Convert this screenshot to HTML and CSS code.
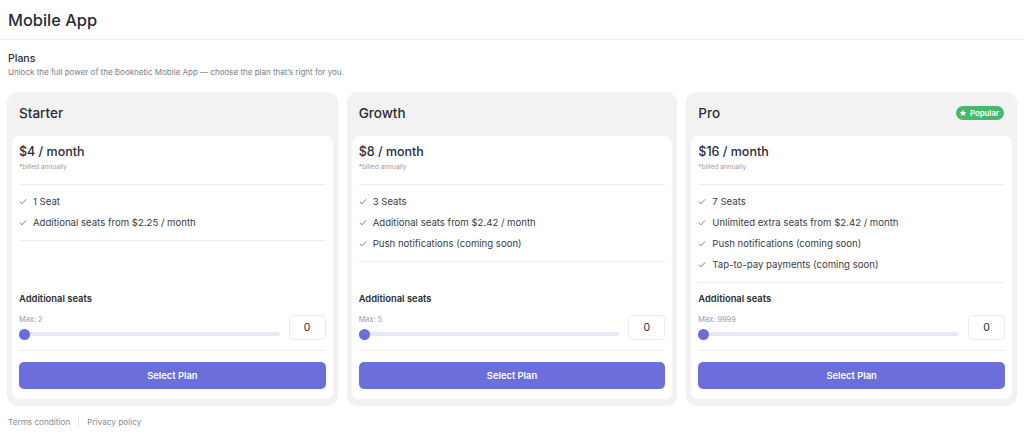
FILE: index.html
```html
<!DOCTYPE html>
<html>
<head>
<meta charset="utf-8">
<link rel="stylesheet" href="styles.css">
</head>
<body>
<header class="topbar"><h1 class="page-title">Mobile App</h1></header>
<main class="content">
  <section class="intro">
    <h2 class="intro-title">Plans</h2>
    <p class="intro-sub">Unlock the full power of the Booknetic Mobile App — choose the plan that’s right for you.</p>
  </section>
  <div class="plans">
    <div class="plan">
      <div class="plan-head"><span class="plan-name">Starter</span></div>
      <div class="plan-body">
        <div class="price">$4 / month</div>
        <div class="billed">*billed annually</div>
        <ul class="features">
          <li><svg class="chk" viewBox="0 0 10 8"><path d="M1 4.2 L3.7 6.8 L9 1.2"/></svg>1 Seat</li>
          <li><svg class="chk" viewBox="0 0 10 8"><path d="M1 4.2 L3.7 6.8 L9 1.2"/></svg>Additional seats from $2.25 / month</li>
        </ul>
        <div class="seats">
          <div class="seats-title">Additional seats</div>
          <div class="seats-row">
            <div class="slider-wrap">
              <div class="max">Max: 2</div>
              <div class="track"><span class="thumb"></span></div>
            </div>
            <div class="count">0</div>
          </div>
        </div>
        <button class="select">Select Plan</button>
      </div>
    </div>
    <div class="plan">
      <div class="plan-head"><span class="plan-name">Growth</span></div>
      <div class="plan-body">
        <div class="price">$8 / month</div>
        <div class="billed">*billed annually</div>
        <ul class="features">
          <li><svg class="chk" viewBox="0 0 10 8"><path d="M1 4.2 L3.7 6.8 L9 1.2"/></svg>3 Seats</li>
          <li><svg class="chk" viewBox="0 0 10 8"><path d="M1 4.2 L3.7 6.8 L9 1.2"/></svg>Additional seats from $2.42 / month</li>
          <li><svg class="chk" viewBox="0 0 10 8"><path d="M1 4.2 L3.7 6.8 L9 1.2"/></svg>Push notifications (coming soon)</li>
        </ul>
        <div class="seats">
          <div class="seats-title">Additional seats</div>
          <div class="seats-row">
            <div class="slider-wrap">
              <div class="max">Max: 5</div>
              <div class="track"><span class="thumb"></span></div>
            </div>
            <div class="count">0</div>
          </div>
        </div>
        <button class="select">Select Plan</button>
      </div>
    </div>
    <div class="plan">
      <div class="plan-head"><span class="plan-name">Pro</span>
        <span class="badge"><svg class="star" viewBox="0 0 10 10"><path d="M5 0.8 L6.2 3.6 L9.2 3.8 L6.9 5.8 L7.6 8.8 L5 7.2 L2.4 8.8 L3.1 5.8 L0.8 3.8 L3.8 3.6 Z"/></svg>Popular</span>
      </div>
      <div class="plan-body">
        <div class="price">$16 / month</div>
        <div class="billed">*billed annually</div>
        <ul class="features">
          <li><svg class="chk" viewBox="0 0 10 8"><path d="M1 4.2 L3.7 6.8 L9 1.2"/></svg>7 Seats</li>
          <li><svg class="chk" viewBox="0 0 10 8"><path d="M1 4.2 L3.7 6.8 L9 1.2"/></svg>Unlimited extra seats from $2.42 / month</li>
          <li><svg class="chk" viewBox="0 0 10 8"><path d="M1 4.2 L3.7 6.8 L9 1.2"/></svg>Push notifications (coming soon)</li>
          <li><svg class="chk" viewBox="0 0 10 8"><path d="M1 4.2 L3.7 6.8 L9 1.2"/></svg>Tap-to-pay payments (coming soon)</li>
        </ul>
        <div class="seats">
          <div class="seats-title">Additional seats</div>
          <div class="seats-row">
            <div class="slider-wrap">
              <div class="max">Max: 9999</div>
              <div class="track"><span class="thumb"></span></div>
            </div>
            <div class="count">0</div>
          </div>
        </div>
        <button class="select">Select Plan</button>
      </div>
    </div>
  </div>
  <footer class="foot">
    <a class="foot-link">Terms condition</a>
    <span class="foot-sep"></span>
    <a class="foot-link">Privacy policy</a>
  </footer>
</main>
</body>
</html>
```
FILE: styles.css
```css
* { box-sizing: border-box; }
html, body { margin: 0; padding: 0; background: #fff; }
body {
  font-family: "Inter", "Open Sans", sans-serif;
  color: #2b2d33;
  width: 1024px;
  height: 438px;
  overflow: hidden;
}
.topbar {
  height: 40px;
  border-bottom: 1px solid #ececef;
  padding: 0 8px;
  display: flex;
  align-items: center;
}
.page-title {
  margin: 0;
  font-size: 16.4px;
  font-weight: 500;
  color: #2a2c33;
}
.content { padding: 0 8px; }
.intro { padding-top: 12px; }
.intro-title {
  margin: 0;
  font-size: 10.5px;
  font-weight: 500;
  color: #2a2c33;
  line-height: 14px;
}
.intro-sub {
  margin: 1px 0 0;
  font-size: 8px;
  color: #7b7e87;
  line-height: 11px;
}
.plans {
  margin-top: 15px;
  display: grid;
  grid-template-columns: repeat(3, 1fr);
  gap: 11px;
}
.plan {
  background: #f2f2f3;
  border-radius: 10px;
  padding: 0 4px 6px;
  display: flex;
  flex-direction: column;
  box-shadow: 0 0 0 1px #f0f1f4, 0 1px 3px rgba(0,0,0,0.04);
}
.plan-head {
  height: 43px;
  display: flex;
  align-items: center;
  justify-content: space-between;
  padding: 0 7px 4px;
}
.plan-name {
  font-size: 13.5px;
  font-weight: 500;
  color: #2a2c33;
}
.badge {
  display: inline-flex;
  align-items: center;
  gap: 3px;
  background: #48b96a;
  color: #fff;
  font-size: 7.8px;
  font-weight: 600;
  height: 14px;
  padding: 0 5px 0 3px;
  border-radius: 8px;
  margin-right: 1px;
}
.star { width: 8px; height: 8px; fill: #fff; }
.plan-body {
  flex: 1;
  background: #fff;
  border-radius: 7px;
  padding: 8px 7px 10px;
  display: flex;
  flex-direction: column;
}
.price {
  font-size: 12.5px;
  font-weight: 500;
  color: #2a2c33;
  line-height: 16px;
}
.billed {
  font-size: 6.6px;
  color: #9a9ca4;
  margin-top: 3px;
  line-height: 9px;
  padding-bottom: 12px;
  border-bottom: 1px solid #ededf0;
}
.features {
  list-style: none;
  margin: 0;
  padding: 6px 0 7px;
  border-bottom: 1px solid #ededf0;
}
.features li {
  display: flex;
  align-items: center;
  height: 21px;
  font-size: 9.6px;
  color: #3a3c44;
}
.chk {
  width: 8px;
  height: 7px;
  margin-right: 6px;
  fill: none;
  stroke: #6d7079;
  stroke-width: 1.1;
}
.seats {
  margin-top: auto;
  padding-top: 10px;
  padding-bottom: 11px;
  border-bottom: 1px solid #ededf0;
}
.seats-title {
  font-size: 9.4px;
  font-weight: 600;
  color: #2a2c33;
  line-height: 12px;
}
.seats-row {
  display: flex;
  align-items: flex-start;
  gap: 9px;
  margin-top: 10px;
  height: 24px;
}
.slider-wrap { flex: 1; }
.max {
  font-size: 7.4px;
  color: #9a9ca4;
  line-height: 9px;
}
.track {
  position: relative;
  height: 4px;
  background: #e7eaf6;
  border-radius: 2px;
  margin-top: 8px;
}
.thumb {
  position: absolute;
  left: 0;
  top: -3.5px;
  width: 11px;
  height: 11px;
  border-radius: 50%;
  background: #6a6ddd;
}
.count {
  width: 37px;
  height: 25px;
  border: 1px solid #ececf0;
  border-radius: 4px;
  display: flex;
  align-items: center;
  justify-content: center;
  font-size: 10.5px;
  color: #2a2c33;
}
.select {
  margin-top: 11px;
  height: 27px;
  border: 0;
  border-radius: 5px;
  background: #6c6edb;
  color: #fff;
  font-family: inherit;
  font-size: 9.4px;
  font-weight: 600;
}
.foot {
  display: flex;
  align-items: center;
  margin-top: 12px;
  font-size: 8.2px;
  color: #8a8c94;
}
.foot-link { color: #8a8c94; }
.foot-sep {
  width: 1px;
  height: 10px;
  background: #e2e3e7;
  margin: 0 8px;
}
```
